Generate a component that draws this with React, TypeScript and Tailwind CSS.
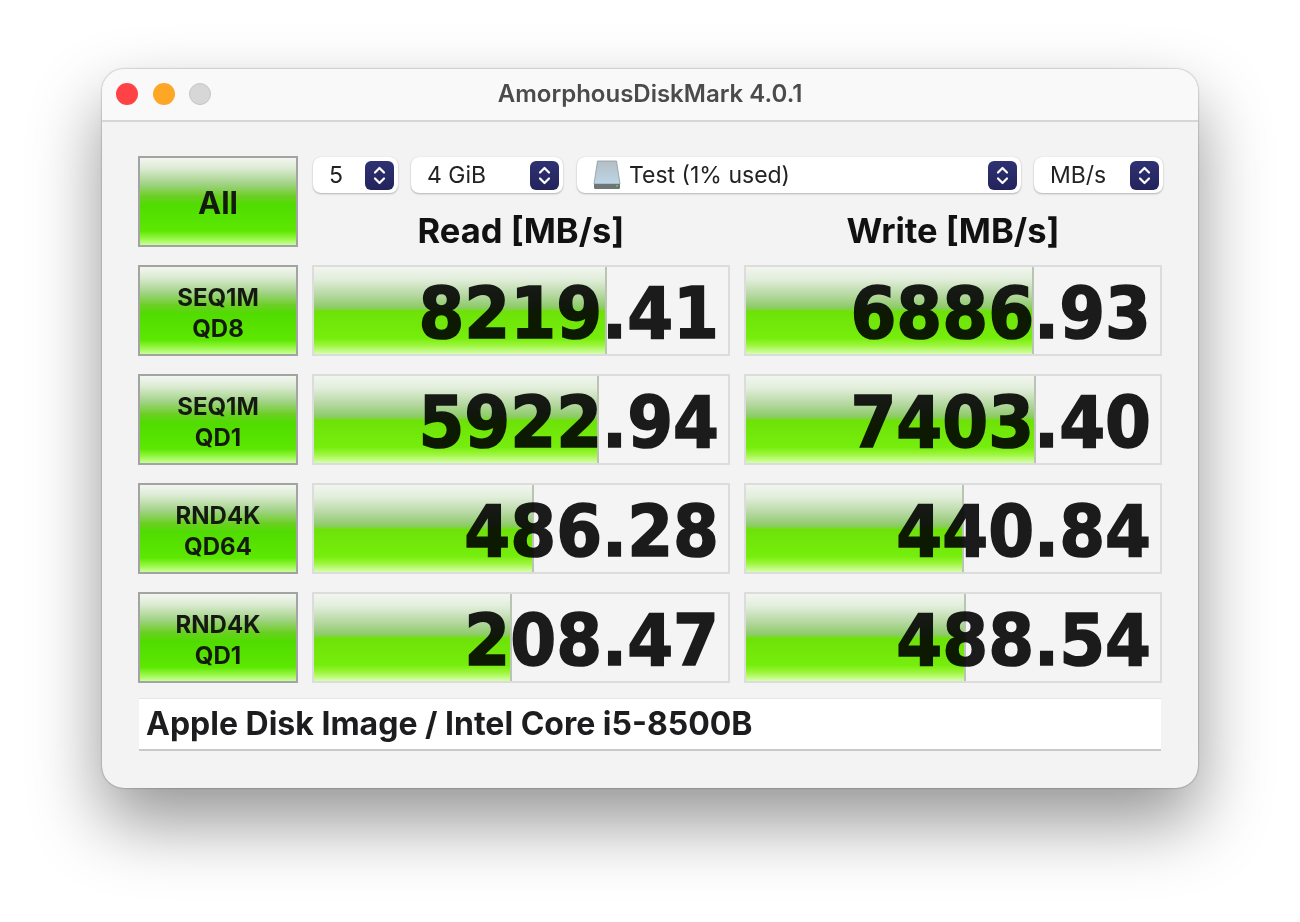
import React from "react";

const SANS = "font-['Inter','Liberation_Sans',sans-serif]";

const BUTTON_BG =
  "bg-[linear-gradient(180deg,#f2f6f0_0%,#dcebd3_12%,#a0d284_30%,#6ccf24_44%,#50dc00_54%,#5de802_84%,#93f63f_92%,#c9ff9a_100%)]";
const METER_BG =
  "bg-[linear-gradient(180deg,#f1f5ef_0%,#e2eedb_14%,#b6d8a2_32%,#8ccb66_47%,#6ee208_51%,#76ee0c_82%,#9df53c_90%,#d6ffae_100%)]";

const rows = [
  { top: "SEQ1M", bottom: "QD8", read: "8219.41", readFill: 293, write: "6886.93", writeFill: 288 },
  { top: "SEQ1M", bottom: "QD1", read: "5922.94", readFill: 285, write: "7403.40", writeFill: 290 },
  { top: "RND4K", bottom: "QD64", read: "486.28", readFill: 220, write: "440.84", writeFill: 218 },
  { top: "RND4K", bottom: "QD1", read: "208.47", readFill: 198, write: "488.54", writeFill: 220 },
];

const Stepper = () => (
  <span className="flex h-[29px] w-[29px] shrink-0 items-center justify-center rounded-[6px] bg-[linear-gradient(180deg,#2f3273,#23245c)]">
    <svg width="15" height="21" viewBox="0 0 15 21" fill="none" stroke="#ffffff" strokeWidth="2.2" strokeLinecap="round" strokeLinejoin="round">
      <path d="M3 7.5 7.5 3l4.5 4.5" />
      <path d="M3 13.5 7.5 18l4.5-4.5" />
    </svg>
  </span>
);

const DriveIcon = () => (
  <svg width="28" height="30" viewBox="0 0 28 30" className="shrink-0">
    <defs>
      <linearGradient id="drive" x1="0" y1="0" x2="0" y2="1">
        <stop offset="0" stopColor="#b4bec6" />
        <stop offset="1" stopColor="#bcd6e6" />
      </linearGradient>
    </defs>
    <path d="M4.5 1h19L27 24H1z" fill="url(#drive)" stroke="#8f979e" strokeWidth="0.8" />
    <path d="M1 24h26v3.5a1.5 1.5 0 0 1-1.5 1.5h-23A1.5 1.5 0 0 1 1 27.5z" fill="#6f7478" />
    <rect x="23" y="25" width="2" height="1.6" fill="#45d43a" />
  </svg>
);

const Select = ({ className, children }: { className: string; children: React.ReactNode }) => (
  <div className={`flex h-[36px] items-center justify-between rounded-[8px] bg-white pr-[4px] text-[23px] text-[#222222] shadow-[0_1px_2px_rgba(0,0,0,0.25),0_0_1px_rgba(0,0,0,0.15)] ${className}`}>
    {children}
    <Stepper />
  </div>
);

const Green = ({ className, children }: { className: string; children: React.ReactNode }) => (
  <div className={`flex h-[91px] w-[160px] shrink-0 flex-col items-center justify-center border-2 border-[#a3a3a3] pt-[4px] font-bold text-[#141a10] ${BUTTON_BG} ${className}`}>
    {children}
  </div>
);

const Meter = ({ value, fill }: { value: string; fill: number }) => (
  <div className="relative flex h-[91px] w-[418px] items-center justify-end overflow-hidden border-2 border-[#dcdcdc] bg-[#f4f4f4] pt-[7px]">
    <div className={`absolute inset-y-0 left-0 border-r-2 border-[#b9c4b2] ${METER_BG}`} style={{ width: fill }} />
    <span className="relative origin-center scale-y-[1.07] pr-[9px] font-['DejaVu_Sans',sans-serif] text-[66px] leading-none font-bold text-[#1c1c1c] mix-blend-multiply [-webkit-text-stroke:1.5px_#1c1c1c]">
      {value}
    </span>
  </div>
);

export default function App() {
  return (
    <div className={`h-[922px] w-[1300px] overflow-hidden bg-white pt-[69px] pl-[102px] ${SANS}`}>
      <div className="h-[719px] w-[1096px] overflow-hidden rounded-[22px] bg-[#f3f3f3] shadow-[0_34px_70px_rgba(0,0,0,0.42),0_0_2px_rgba(0,0,0,0.45)]">
        {/* title bar */}
        <div className="relative flex h-[53px] items-center justify-center border-b-2 border-[#d6d6d6] bg-[#f9f9f9] pb-[2px]">
          <div className="absolute top-[14px] left-[14px] flex gap-[14.5px]">
            <span className="h-[22px] w-[22px] rounded-full bg-[#fe4245]" />
            <span className="h-[22px] w-[22px] rounded-full bg-[#fea726]" />
            <span className="h-[22px] w-[22px] rounded-full border border-[#c4c4c4] bg-[#d7d7d7]" />
          </div>
          <span className="text-[24px] font-semibold text-[#4b4b4b]">AmorphousDiskMark 4.0.1</span>
        </div>

        <div className="flex flex-col gap-[18px] pt-[34px] pl-[36px]">
          {/* controls */}
          <div className="flex gap-[14px]">
            <Green className="text-[31px]">All</Green>
            <div className="flex h-[91px] flex-col">
              <div className="flex pt-[1px]">
                <Select className="ml-[1px] w-[85px] pl-[16px]"><span>5</span></Select>
                <Select className="ml-[13px] w-[152px] pl-[16px]"><span>4 GiB</span></Select>
                <Select className="ml-[14px] w-[444px] pl-[16px]">
                  <span className="flex items-center gap-[8px]"><DriveIcon />Test (1% used)</span>
                </Select>
                <Select className="ml-[13px] w-[129px] pl-[16px]"><span>MB/s</span></Select>
              </div>
              <div className="flex gap-[14px] pt-[19px] text-center text-[34.5px] leading-[38px] font-bold text-[#111111]">
                <span className="w-[418px]">Read [MB/s]</span>
                <span className="w-[418px]">Write [MB/s]</span>
              </div>
            </div>
          </div>

          {/* results */}
          {rows.map((row) => (
            <div key={row.top + row.bottom} className="flex gap-[14px]">
              <Green className="text-[24px] leading-[31px]">
                <span>{row.top}</span>
                <span>{row.bottom}</span>
              </Green>
              <Meter value={row.read} fill={row.readFill} />
              <Meter value={row.write} fill={row.writeFill} />
            </div>
          ))}

          {/* comment */}
          <div className="-mt-[3px] ml-[1px] flex h-[53px] w-[1022px] items-center border-t border-b-2 border-[#e6e6e6] border-b-[#c8c8c8] bg-white pl-[7px] text-[32px] font-bold text-[#1d1d1f]">
            Apple Disk Image / Intel Core i5-8500B
          </div>
        </div>
      </div>
    </div>
  );
}
